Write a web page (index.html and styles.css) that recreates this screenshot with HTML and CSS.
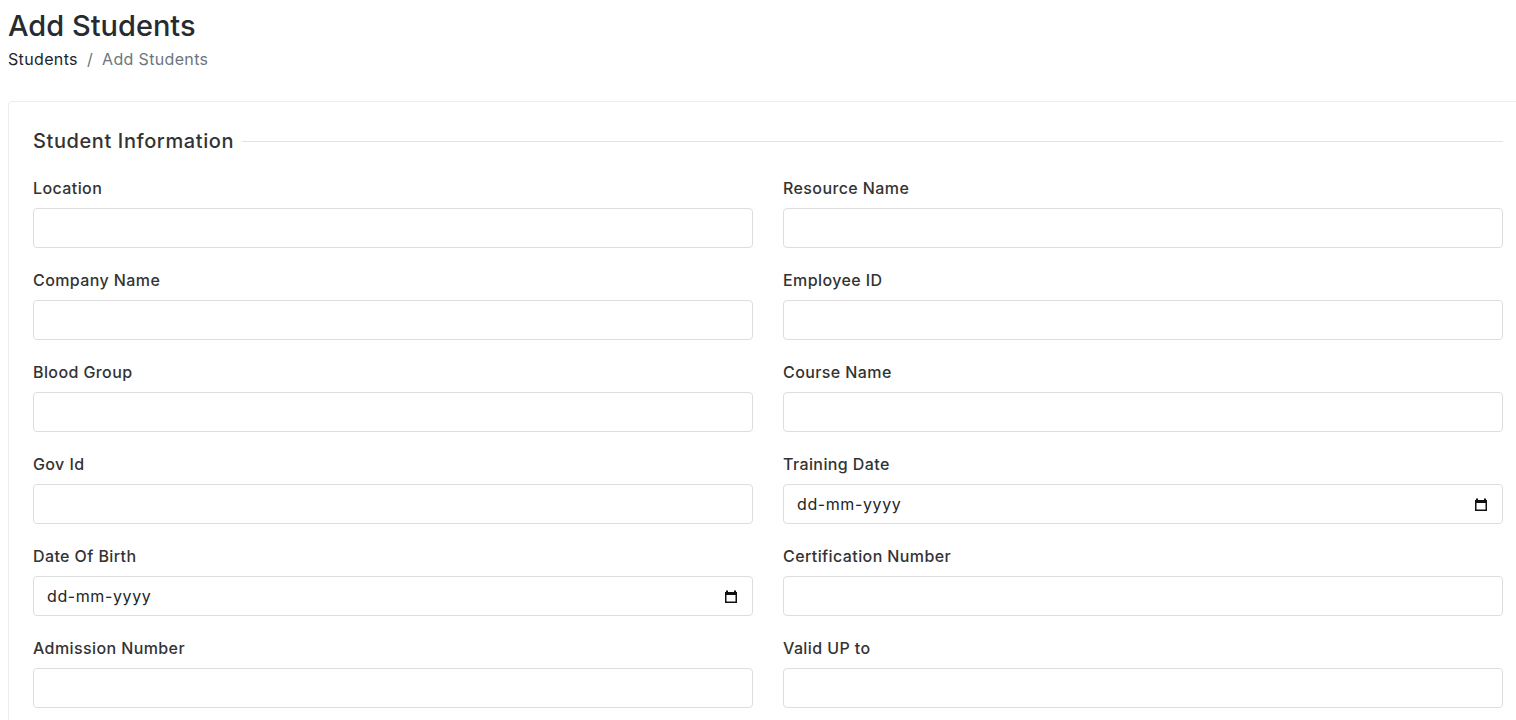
FILE: index.html
```html
<!DOCTYPE html>
<html lang="en">
<head>
<meta charset="utf-8">
<title>Add Students</title>
<link rel="stylesheet" href="styles.css">
</head>
<body>
<div class="page">
  <div class="page-header">
    <h1 class="page-title">Add Students</h1>
    <nav class="breadcrumb">
      <span class="crumb">Students</span>
      <span class="sep">/</span>
      <span class="crumb active">Add Students</span>
    </nav>
  </div>
  <div class="card">
    <div class="legend"><span class="legend-text">Student Information</span><span class="legend-line"></span></div>
    <div class="grid">
      <div class="field"><label class="label">Location</label><input class="input" type="text"></div>
      <div class="field"><label class="label">Resource Name</label><input class="input" type="text"></div>
      <div class="field"><label class="label">Company Name</label><input class="input" type="text"></div>
      <div class="field"><label class="label">Employee ID</label><input class="input" type="text"></div>
      <div class="field"><label class="label">Blood Group</label><input class="input" type="text"></div>
      <div class="field"><label class="label">Course Name</label><input class="input" type="text"></div>
      <div class="field"><label class="label">Gov Id</label><input class="input" type="text"></div>
      <div class="field"><label class="label">Training Date</label>
        <div class="input date-box"><input class="date-text" type="text" placeholder="dd-mm-yyyy">
          <svg class="cal" width="14" height="15" viewBox="0 0 14 15"><path d="M2 1.5h2v1.5h6V1.5h2v1.5h1v11H1V3h1z M2.5 6v6.5h9V6z" fill="#111" fill-rule="evenodd"/></svg>
        </div>
      </div>
      <div class="field"><label class="label">Date Of Birth</label>
        <div class="input date-box"><input class="date-text" type="text" placeholder="dd-mm-yyyy">
          <svg class="cal" width="14" height="15" viewBox="0 0 14 15"><path d="M2 1.5h2v1.5h6V1.5h2v1.5h1v11H1V3h1z M2.5 6v6.5h9V6z" fill="#111" fill-rule="evenodd"/></svg>
        </div>
      </div>
      <div class="field"><label class="label">Certification Number</label><input class="input" type="text"></div>
      <div class="field"><label class="label">Admission Number</label><input class="input" type="text"></div>
      <div class="field"><label class="label">Valid UP to</label><input class="input" type="text"></div>
    </div>
  </div>
</div>
</body>
</html>
```
FILE: styles.css
```css
html, body {
  margin: 0;
  padding: 0;
  background: #ffffff;
  overflow-x: hidden;
}
body {
  font-family: "Inter", "Noto Sans", sans-serif;
  color: #333333;
}
.page {
  padding: 0 0 0 8px;
}
.page-header {
  padding-top: 8px;
  margin-bottom: 30px;
}
.page-title {
  margin: 0;
  font-size: 29px;
  line-height: 36px;
  font-weight: 500;
  color: #272b30;
}
.breadcrumb {
  display: flex;
  align-items: center;
  gap: 9px;
  margin-top: 3px;
  font-size: 16px;
  line-height: 24px;
  letter-spacing: 0.35px;
}
.crumb {
  color: #212529;
}
.crumb.active {
  color: #6c757d;
}
.sep {
  color: #6c757d;
}
.card {
  margin-right: -12px;
  border: 1px solid #ebedf2;
  border-radius: 4px;
  padding: 24px;
  background: #fff;
}
.legend {
  display: flex;
  align-items: center;
  gap: 8px;
  height: 30px;
  margin-bottom: 20px;
}
.legend-text {
  font-size: 20px;
  font-weight: 500;
  letter-spacing: 0.6px;
  color: #333;
  white-space: nowrap;
}
.legend-line {
  flex: 1;
  height: 1px;
  background: #e3e3e3;
}
.grid {
  display: grid;
  grid-template-columns: 1fr 1fr;
  column-gap: 30px;
}
.field {
  display: flex;
  flex-direction: column;
  margin-bottom: 20px;
}
.label {
  font-size: 16px;
  line-height: 24px;
  font-weight: 500;
  letter-spacing: 0.4px;
  color: #333;
  margin-bottom: 8px;
}
.input {
  box-sizing: border-box;
  height: 40px;
  border: 1px solid #dddddd;
  border-radius: 4px;
  padding: 0 13px;
  font-family: inherit;
  font-size: 15px;
  color: #333;
  background: #fff;
  outline: none;
}
.date-box {
  display: flex;
  align-items: center;
  gap: 8px;
  padding: 0 14px 0 13px;
}
.date-text {
  flex: 1;
  min-width: 0;
  border: 0;
  outline: none;
  padding: 0;
  font-family: inherit;
  font-size: 16px;
  letter-spacing: 0.6px;
  color: #212529;
  background: transparent;
}
.date-text::placeholder {
  color: #212529;
  opacity: 1;
}
.cal {
  flex: none;
}
```
